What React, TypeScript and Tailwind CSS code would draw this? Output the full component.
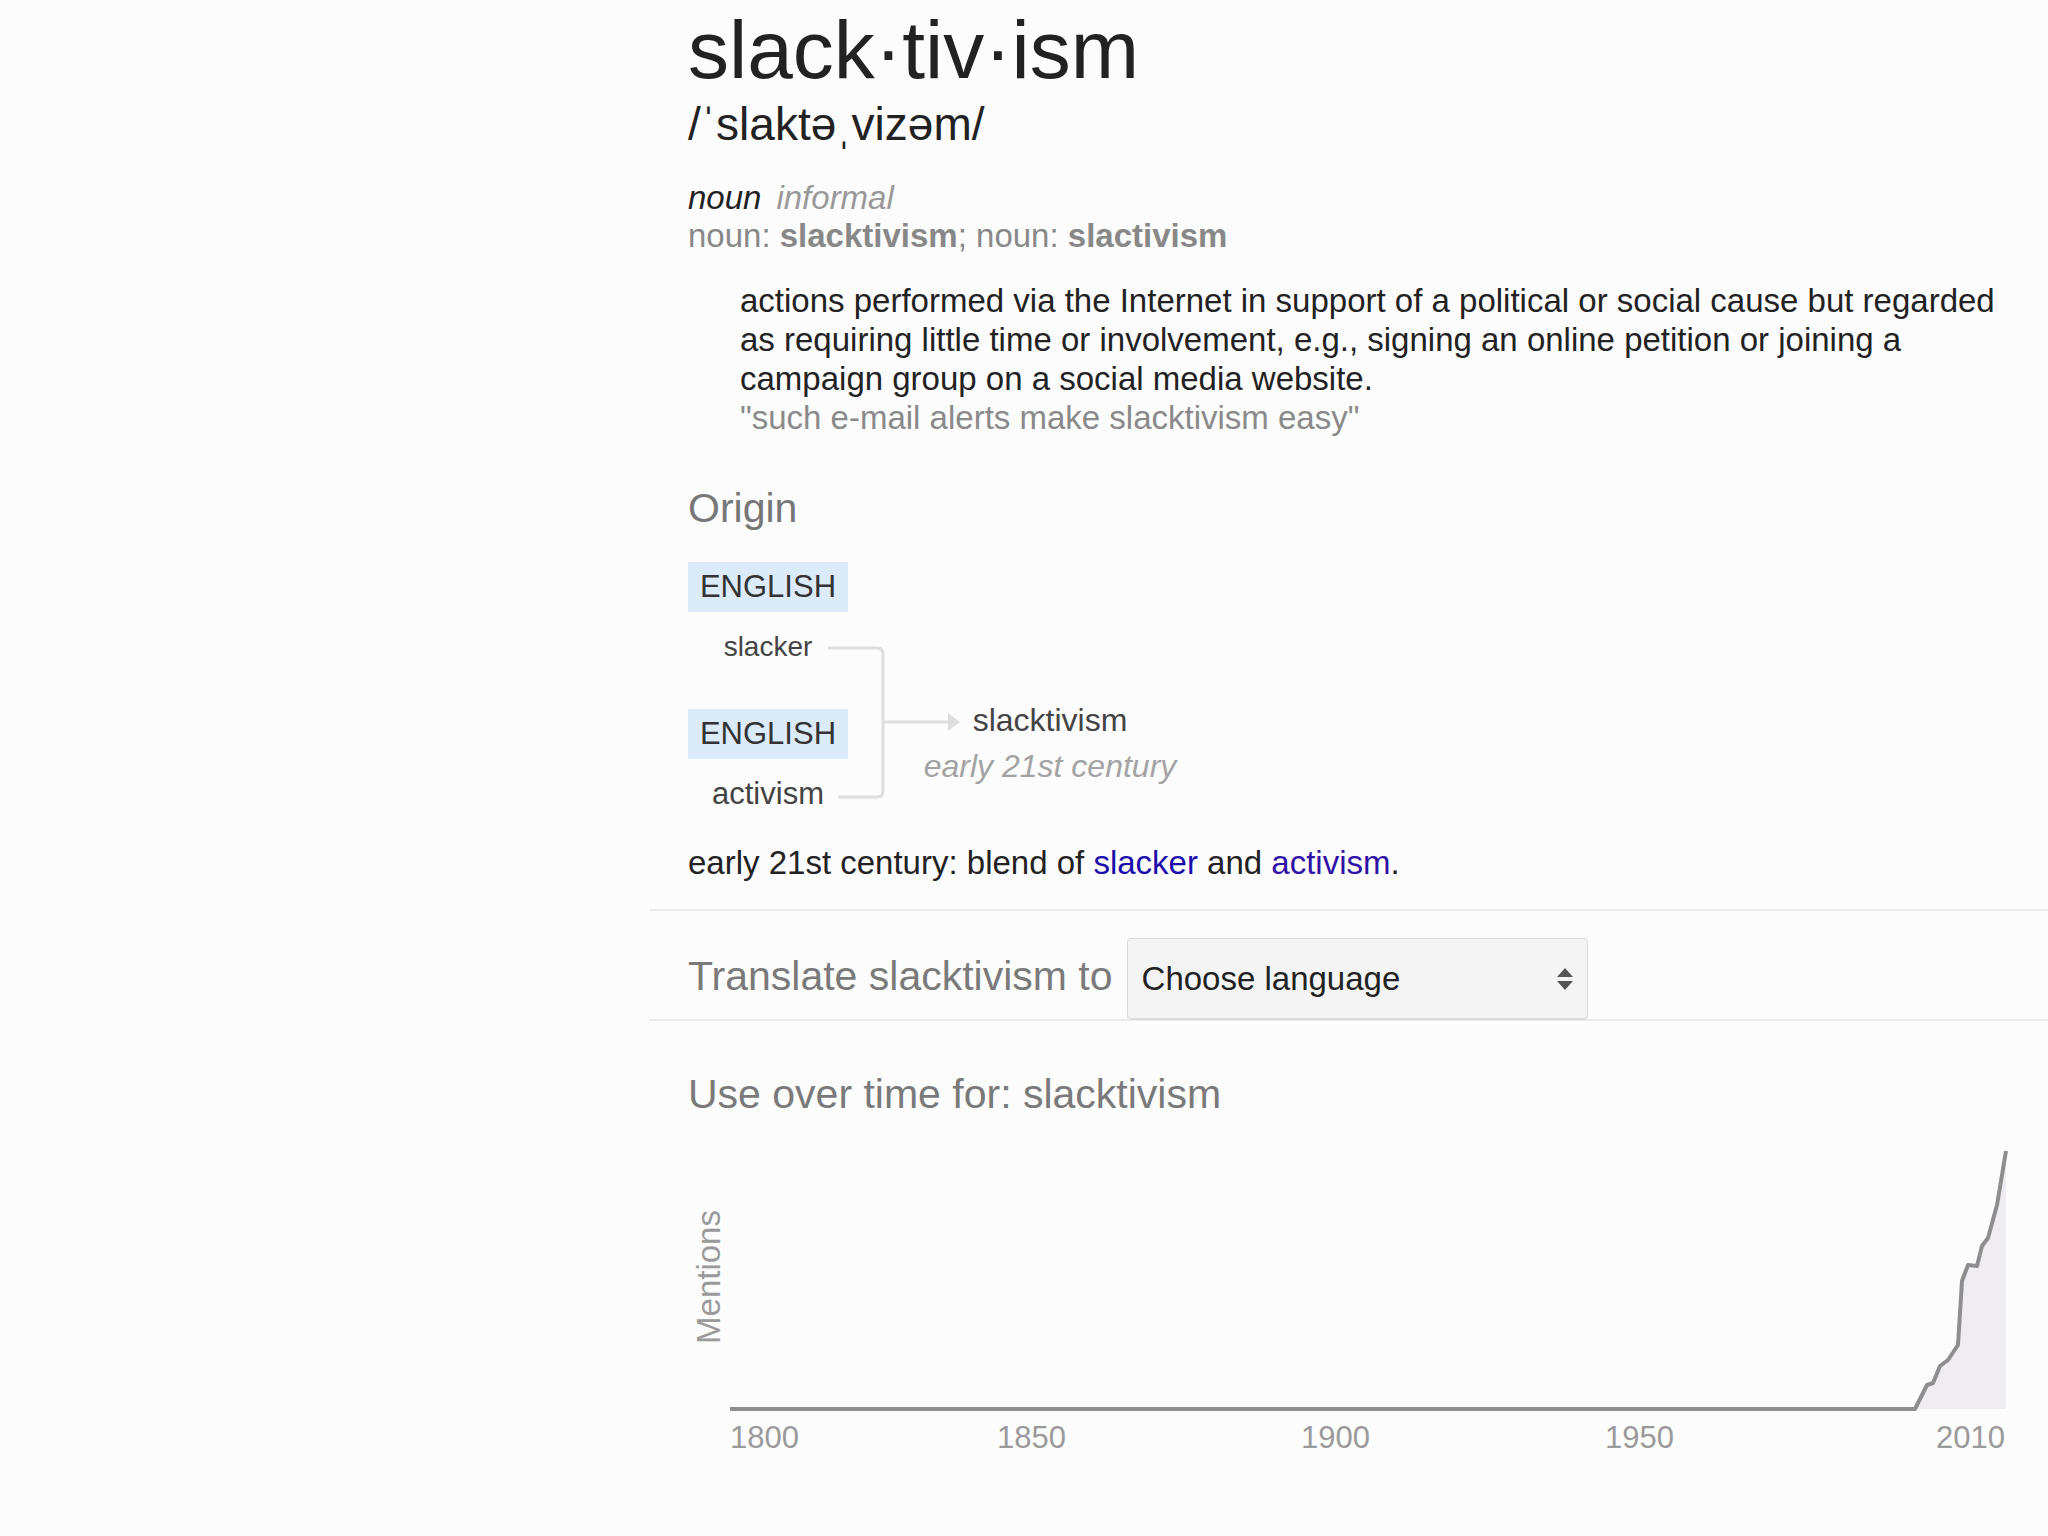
import React from 'react';

const curve: [number, number][] = [
  [1227, 291], [1239, 267], [1245, 265], [1252, 248], [1260, 242], [1270, 227],
  [1274, 163], [1280, 147], [1289, 148], [1294, 128], [1300, 120], [1309, 87],
  [1314, 57], [1318, 33],
];

const years = [
  { label: '1800', x: 42, anchor: 'start' },
  { label: '1850', x: 309, anchor: 'start' },
  { label: '1900', x: 613, anchor: 'start' },
  { label: '1950', x: 917, anchor: 'start' },
  { label: '2010', x: 1317, anchor: 'end' },
];

const UsageChart: React.FC = () => {
  const line = `M42 291 H1227 ` + curve.slice(1).map(([x, y]) => `L${x} ${y}`).join(' ');
  const area = `M1227 291 ` + curve.slice(1).map(([x, y]) => `L${x} ${y}`).join(' ') + ' L1318 291 Z';

  return (
    <svg width="1360" height="360" viewBox="0 0 1360 360" className="block">
      <path d={area} fill="#efedf2" />
      <path d={line} fill="none" stroke="#8e8e8e" strokeWidth="4" strokeLinejoin="round" />
      <text
        x="20"
        y="159"
        transform="rotate(-90 20 159)"
        textAnchor="middle"
        dominantBaseline="central"
        fontSize="33"
        fill="#9a9a9a"
        fontFamily="'Liberation Sans', Arial, sans-serif"
      >
        Mentions
      </text>
      {years.map((y) => (
        <text
          key={y.label}
          x={y.x}
          y="330"
          textAnchor={y.anchor as 'start' | 'end'}
          fontSize="31"
          fill="#9a9a9a"
          fontFamily="'Liberation Sans', Arial, sans-serif"
        >
          {y.label}
        </text>
      ))}
    </svg>
  );
};

const OriginDiagram: React.FC = () => (
  <div className="relative mt-[30px] flex">
    {/* connectors */}
    <svg className="absolute left-0 top-0 pointer-events-none" width="300" height="251" viewBox="0 0 300 251">
      <path d="M140 86 H189 Q195 86 195 92 V229 Q195 235 189 235 H150" fill="none" stroke="#dedede" strokeWidth="3" />
      <path d="M195 160 H262" fill="none" stroke="#dedede" strokeWidth="3" />
      <polygon points="260,151 272,160 260,169" fill="#dedede" />
    </svg>

    <div className="w-[160px] flex flex-col items-center">
      <div className="w-full h-[50px] bg-[#dcebfa] flex items-center justify-center text-[31px] text-[#333]">ENGLISH</div>
      <div className="mt-[18px] text-[28px] leading-[34px] text-[#444]">slacker</div>
      <div className="mt-[45px] w-full h-[50px] bg-[#dcebfa] flex items-center justify-center text-[31px] text-[#333]">ENGLISH</div>
      <div className="mt-[17px] text-[31px] leading-[36px] text-[#444]">activism</div>
    </div>

    <div className="ml-[62px] w-[280px] pt-[139px] text-center">
      <div className="text-[32px] leading-[38px] text-[#444]">slacktivism</div>
      <div className="mt-[8px] text-[32px] leading-[38px] italic text-[#a3a3a3]">early 21st century</div>
    </div>
  </div>
);

const App: React.FC = () => {
  return (
    <div className="min-h-screen w-full bg-[#fdfcfd] font-['Liberation_Sans',Arial,sans-serif] pl-[649px] pt-[5px] pb-[60px]">
      {/* Headword + definition */}
      <section className="pl-[39px]">
        <h1 className="text-[82px] leading-[90px] text-[#222]">slack·tiv·ism</h1>
        <div className="mt-[3px] text-[46px] leading-[52px] text-[#222]">/ˈslaktəˌvizəm/</div>

        <div className="mt-[29px] flex gap-[15px] text-[33px] leading-[38px] italic">
          <span className="text-[#222]">noun</span>
          <span className="text-[#999]">informal</span>
        </div>
        <div className="text-[33px] leading-[38px] text-[#888]">
          noun: <b>slacktivism</b>; noun: <b>slactivism</b>
        </div>

        <div className="mt-[26px] pl-[52px] max-w-[1342px] text-[33px] leading-[39px] text-[#222]">
          <p>
            actions performed via the Internet in support of a political or social cause but regarded as requiring little
            time or involvement, e.g., signing an online petition or joining a campaign group on a social media website.
          </p>
          <p className="text-[#8a8a8a]">"such e-mail alerts make slacktivism easy"</p>
        </div>

        {/* Origin */}
        <h2 className="mt-[47px] text-[41px] leading-[48px] text-[#777]">Origin</h2>
        <OriginDiagram />
        <p className="mt-[31px] text-[33px] leading-[39px] text-[#222]">
          early 21st century: blend of <span className="text-[#1a0dab]">slacker</span> and{' '}
          <span className="text-[#2f12a6]">activism</span>.
        </p>
      </section>

      <div className="mt-[27px] h-[2px] bg-[#ececec]" />

      {/* Translate */}
      <div className="pl-[39px] pt-[27px] flex items-center gap-[14px]">
        <span className="pb-[5px] text-[41px] leading-[48px] text-[#7a7a7a]">Translate slacktivism to</span>
        <div className="w-[461px] h-[81px] rounded-[4px] border border-[#dcdcdc] bg-[#f4f4f4] flex items-center justify-between pl-[14px] pr-[12px] shadow-[0_1px_1px_rgba(0,0,0,0.08)]">
          <span className="text-[33px] text-[#222]">Choose language</span>
          <svg width="20" height="24" viewBox="0 0 20 24">
            <polygon points="2,10 10,1 18,10" fill="#555" />
            <polygon points="2,14 10,23 18,14" fill="#555" />
          </svg>
        </div>
      </div>

      <div className="h-[2px] bg-[#ececec]" />

      {/* Use over time */}
      <section className="pl-[39px]">
        <h2 className="mt-[49px] text-[41px] leading-[48px] text-[#7a7a7a]">Use over time for: slacktivism</h2>
        <UsageChart />
      </section>
    </div>
  );
};

export default App;
